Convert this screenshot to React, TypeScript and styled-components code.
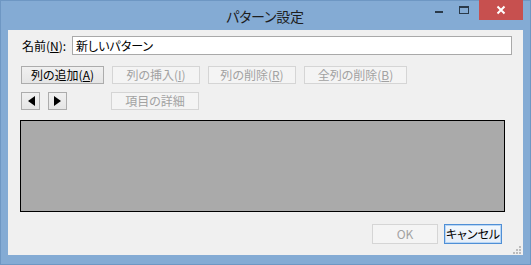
import styled, { createGlobalStyle } from "styled-components";

const GlobalStyle = createGlobalStyle`
  html, body {
    margin: 0;
    padding: 0;
    background: #ffffff;
  }
  body {
    font-family: "Noto Sans CJK JP", "Noto Sans", sans-serif;
    font-feature-settings: "palt";
  }
`;

const Frame = styled.div`
  width: 531px;
  height: 265px;
  box-sizing: border-box;
  display: flex;
  flex-direction: column;
  background: #84abd4;
  border: 1px solid #6e97c3;
  padding: 0 7px 9px 7px;
`;

const TitleBar = styled.div`
  height: 29px;
  display: grid;
  grid-template-columns: 1fr auto 1fr;
  align-items: start;
`;

const Title = styled.div`
  grid-column: 2;
  padding-top: 5px;
  font-size: 14px;
  line-height: 20px;
  color: #1e1e1e;
  letter-spacing: -0.2px;
  margin-left: -1px;
`;

const Controls = styled.div`
  grid-column: 3;
  justify-self: end;
  display: flex;
  align-items: flex-start;
`;

const ControlButton = styled.div<{ $close?: boolean }>`
  width: ${(p) => (p.$close ? "44px" : "25px")};
  height: 20px;
  display: flex;
  align-items: center;
  justify-content: center;
  background: ${(p) => (p.$close ? "#c7504f" : "transparent")};
  margin-top: -1px;
`;

const Client = styled.div`
  flex: 1;
  position: relative;
  background: #f0f0f0;
  padding: 6px 11px 0 12px;
  display: flex;
  flex-direction: column;
  font-size: 12px;
  color: #000;
`;

const NameRow = styled.div`
  display: flex;
  align-items: center;
  height: 19px;
`;

const Label = styled.label`
  width: 50px;
  margin-left: 2px;
  line-height: 19px;
`;

const NameInput = styled.div`
  flex: 1;
  height: 19px;
  box-sizing: border-box;
  border: 1px solid #a9a9a9;
  background: #fff;
  padding: 0 3px;
  line-height: 17px;
`;

const ButtonRow = styled.div<{ $top: number }>`
  display: flex;
  gap: 8px;
  margin-top: ${(p) => p.$top}px;
  margin-left: 1px;
`;

const Button = styled.div<{ $w: number; $disabled?: boolean; $default?: boolean; $h?: number }>`
  width: ${(p) => p.$w}px;
  height: ${(p) => p.$h ?? 18}px;
  box-sizing: border-box;
  display: flex;
  align-items: center;
  justify-content: center;
  white-space: nowrap;
  font-size: 12px;
  line-height: 1;
  color: ${(p) => (p.$disabled ? "#a2a2a2" : "#000")};
  border: 1px solid
    ${(p) => (p.$disabled ? "#d5d5d5" : p.$default ? "#4f8fd6" : "#acacac")};
  background: ${(p) =>
    p.$disabled
      ? "#f4f4f4"
      : p.$default
      ? "linear-gradient(#f3f8fd, #e6eef8)"
      : "linear-gradient(#f0f0f0, #e5e5e5)"};
  box-shadow: ${(p) => (p.$default ? "inset 0 0 0 1px #b9d6f4" : "none")};
`;

const Spacer = styled.div<{ $w: number }>`
  width: ${(p) => p.$w}px;
  flex-shrink: 0;
`;

const Preview = styled.div`
  margin-top: 10px;
  width: 485px;
  height: 92px;
  box-sizing: border-box;
  border: 1px solid #000;
  background: #aaaaaa;
`;

const Footer = styled.div`
  margin-top: 12px;
  margin-right: 10px;
  display: flex;
  justify-content: flex-end;
  gap: 6px;
`;

const Grip = styled.svg`
  position: absolute;
  right: 2px;
  bottom: 1px;
`;

const Arrow = ({ dir }: { dir: "left" | "right" }) => (
  <svg width="8" height="10" viewBox="0 0 8 10">
    {dir === "left" ? (
      <polygon points="8,0 8,10 1,5" fill="#000" />
    ) : (
      <polygon points="0,0 0,10 7,5" fill="#000" />
    )}
  </svg>
);

const Mn = ({ children }: { children: string }) => (
  <span style={{ textDecoration: "underline" }}>{children}</span>
);

export default function App() {
  return (
    <>
      <GlobalStyle />
      <Frame>
        <TitleBar>
          <Title>パターン設定</Title>
          <Controls>
            <ControlButton>
              <svg width="10" height="10" viewBox="0 0 10 10">
                <rect x="1" y="6" width="8" height="2" fill="#2a3a4a" />
              </svg>
            </ControlButton>
            <ControlButton>
              <svg width="12" height="10" viewBox="0 0 12 10">
                <rect x="1.5" y="1.5" width="9" height="7" fill="none" stroke="#2a3a4a" strokeWidth="1" />
                <rect x="1" y="1" width="10" height="2" fill="#2a3a4a" />
              </svg>
            </ControlButton>
            <Spacer $w={3} />
            <ControlButton $close>
              <svg width="10" height="10" viewBox="0 0 10 10">
                <path d="M1.5 1.5 L8.5 8.5 M8.5 1.5 L1.5 8.5" stroke="#fff" strokeWidth="2" />
              </svg>
            </ControlButton>
          </Controls>
        </TitleBar>
        <Client>
          <NameRow>
            <Label>
              名前(<Mn>N</Mn>):
            </Label>
            <NameInput>新しいパターン</NameInput>
          </NameRow>
          <ButtonRow $top={11}>
            <Button $w={83}>
              列の追加(<Mn>A</Mn>)
            </Button>
            <Button $w={88} $disabled>
              列の挿入(<Mn>I</Mn>)
            </Button>
            <Button $w={88} $disabled>
              列の削除(<Mn>R</Mn>)
            </Button>
            <Button $w={103} $disabled>
              全列の削除(<Mn>B</Mn>)
            </Button>
          </ButtonRow>
          <ButtonRow $top={8}>
            <Button $w={19}>
              <Arrow dir="left" />
            </Button>
            <Button $w={19}>
              <Arrow dir="right" />
            </Button>
            <Spacer $w={28} />
            <Button $w={88} $disabled>
              項目の詳細
            </Button>
          </ButtonRow>
          <Preview />
          <Footer>
            <Button $w={66} $h={20} $disabled>
              OK
            </Button>
            <Button $w={58} $h={20} $default>
              キャンセル
            </Button>
          </Footer>
          <Grip width="9" height="9" viewBox="0 0 9 9">
            {[
              [7, 1],
              [4, 4],
              [7, 4],
              [1, 7],
              [4, 7],
              [7, 7],
            ].map(([x, y]) => (
              <rect key={`${x}-${y}`} x={x} y={y} width="2" height="2" fill="#bcbcbc" />
            ))}
          </Grip>
        </Client>
      </Frame>
    </>
  );
}
